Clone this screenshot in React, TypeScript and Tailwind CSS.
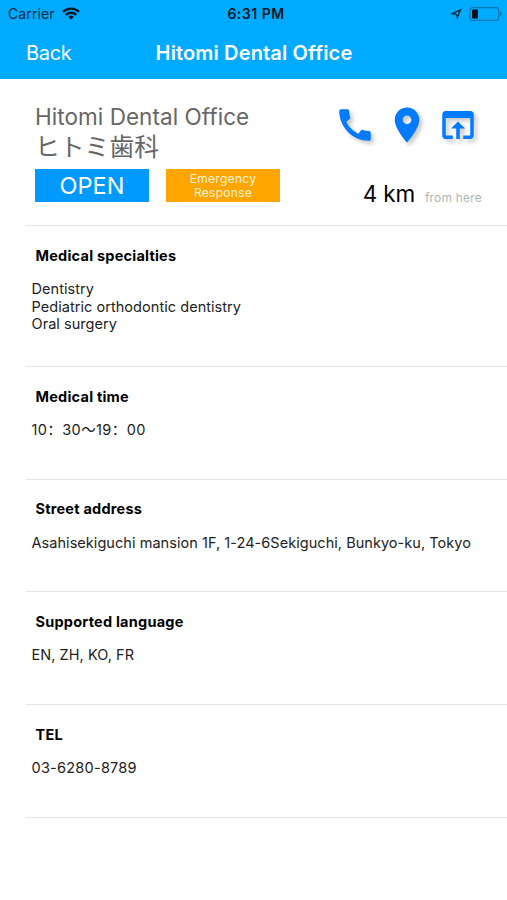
import type { ReactNode } from "react";
import { MdCall, MdPlace, MdOpenInBrowser } from "react-icons/md";

function StatusBar() {
  return (
    <div className="flex h-[27px] items-center justify-between pl-2 pr-[5px] text-[14px] leading-none text-[#062a3d]">
      <div className="flex w-[120px] items-center gap-[7px]">
        <span className="tracking-[0.1px]">Carrier</span>
        <svg width="18" height="13" viewBox="0 0 18 13" fill="none" stroke="#001824" strokeWidth="2.3">
          <path d="M1 4.9a11.4 11.4 0 0 1 16 0" />
          <path d="M3.8 7.9a7.4 7.4 0 0 1 10.4 0" />
          <path d="M9 12.6 6.2 9.9a4 4 0 0 1 5.6 0Z" fill="#001824" stroke="none" />
        </svg>
      </div>
      <span className="pl-[2px] font-semibold tracking-[0.5px] text-[#001824]">6:31 PM</span>
      <div className="flex w-[120px] items-center justify-end gap-[7px]">
        <svg width="12" height="12" viewBox="0 0 12 12">
          <path fillRule="evenodd" fill="#06344c" d="M12 .3 7.2 11.8 6 7 .1 5.9ZM8.4 3.5 4.6 5.3l2.4.6.5 1.6Z" />
        </svg>
        <svg width="33" height="14" viewBox="0 0 33 14">
          <rect x="1" y=".7" width="28.6" height="12.6" rx="2.6" fill="none" stroke="#0878b0" strokeWidth="1.2" />
          <rect x="3" y="2.6" width="6" height="8.8" rx=".8" fill="#001019" />
          <path d="M31 4.6c2 .8 2 4 0 4.8Z" fill="#0878b0" />
        </svg>
      </div>
    </div>
  );
}

function Section({ title, tall, children }: { title: string; tall?: boolean; children: ReactNode }) {
  return (
    <section className={`ml-[26px] border-b border-[#e3e3e3] pl-[5.5px] pt-[20.5px] ${tall ? "h-[141.3px]" : "h-[112.6px]"}`}>
      <h2 className="pl-1 text-[14.5px] font-bold leading-[18px] tracking-[0.22px] text-black">{title}</h2>
      <div className="mt-[15.5px] whitespace-nowrap text-[14.5px] leading-[17.7px] tracking-[0.05px] text-[#222]">{children}</div>
    </section>
  );
}

export default function App() {
  return (
    <div className="h-[900px] w-[507px] overflow-hidden bg-white font-['Inter','Noto_Sans_CJK_JP',sans-serif]">
      <header className="h-[79px] bg-[#00aaff]">
        <StatusBar />
        <div className="grid h-[52px] grid-cols-[1fr_auto_1fr] items-center px-[26px] text-[20px] leading-none text-white">
          <span className="tracking-[-0.3px]">Back</span>
          <h1 className="pl-[1px] font-semibold tracking-[0.15px]">Hitomi Dental Office</h1>
        </div>
      </header>
      <div className="flex h-[146px] justify-between pl-[35px] pr-[25px]">
        <div className="pt-[23px]">
          <div className="whitespace-nowrap text-[22.5px] leading-[30px] text-[#666]">
            <p className="tracking-[0.05px]">Hitomi Dental Office</p>
            <p className="text-[24.8px]">ヒトミ歯科</p>
          </div>
          <div className="mt-[7px] flex gap-[17px]">
            <div className="flex h-[33px] w-[114px] items-center justify-center bg-[#0099ff] pt-[1px] text-[23.5px] text-white">OPEN</div>
            <div className="flex h-[33px] w-[114px] flex-col items-center justify-center bg-[#ffa500] pt-[1px] text-[12px] leading-[14px] tracking-[0.3px] text-[#fff5dc]">
              <span>Emergency</span>
              <span>Response</span>
            </div>
          </div>
        </div>
        <div className="flex flex-col items-end pt-[24.5px]">
          <div className="mr-[3px] flex gap-[9.5px] text-[#007aff] drop-shadow-[3px_3px_2px_rgba(0,0,0,0.22)]">
            <MdCall size={42} />
            <MdPlace size={42} />
            <MdOpenInBrowser size={42} />
          </div>
          <div className="mt-[33.5px] flex items-baseline gap-[10px] whitespace-nowrap leading-[30px]">
            <span className="text-[22.5px] tracking-[-0.2px] text-black">4 km</span>
            <span className="text-[12px] tracking-[0.2px] text-[#b3b3b3]">from here</span>
          </div>
        </div>
      </div>
      <main>
        <div className="ml-[26px] h-px bg-[#e3e3e3]" />
        <Section title="Medical specialties" tall>
          <p>Dentistry</p>
          <p>Pediatric orthodontic dentistry</p>
          <p>Oral surgery</p>
        </Section>
        <Section title="Medical time">
          <span lang="zh-CN" className="font-['Inter','Noto_Sans_CJK_SC',sans-serif] tracking-[0.4px]">10：30〜19：00</span>
        </Section>
        <Section title="Street address">Asahisekiguchi mansion 1F, 1-24-6Sekiguchi, Bunkyo-ku, Tokyo</Section>
        <Section title="Supported language">EN, ZH, KO, FR</Section>
        <Section title="TEL">
          <span className="tracking-[0.25px]">03-6280-8789</span>
        </Section>
      </main>
    </div>
  );
}
